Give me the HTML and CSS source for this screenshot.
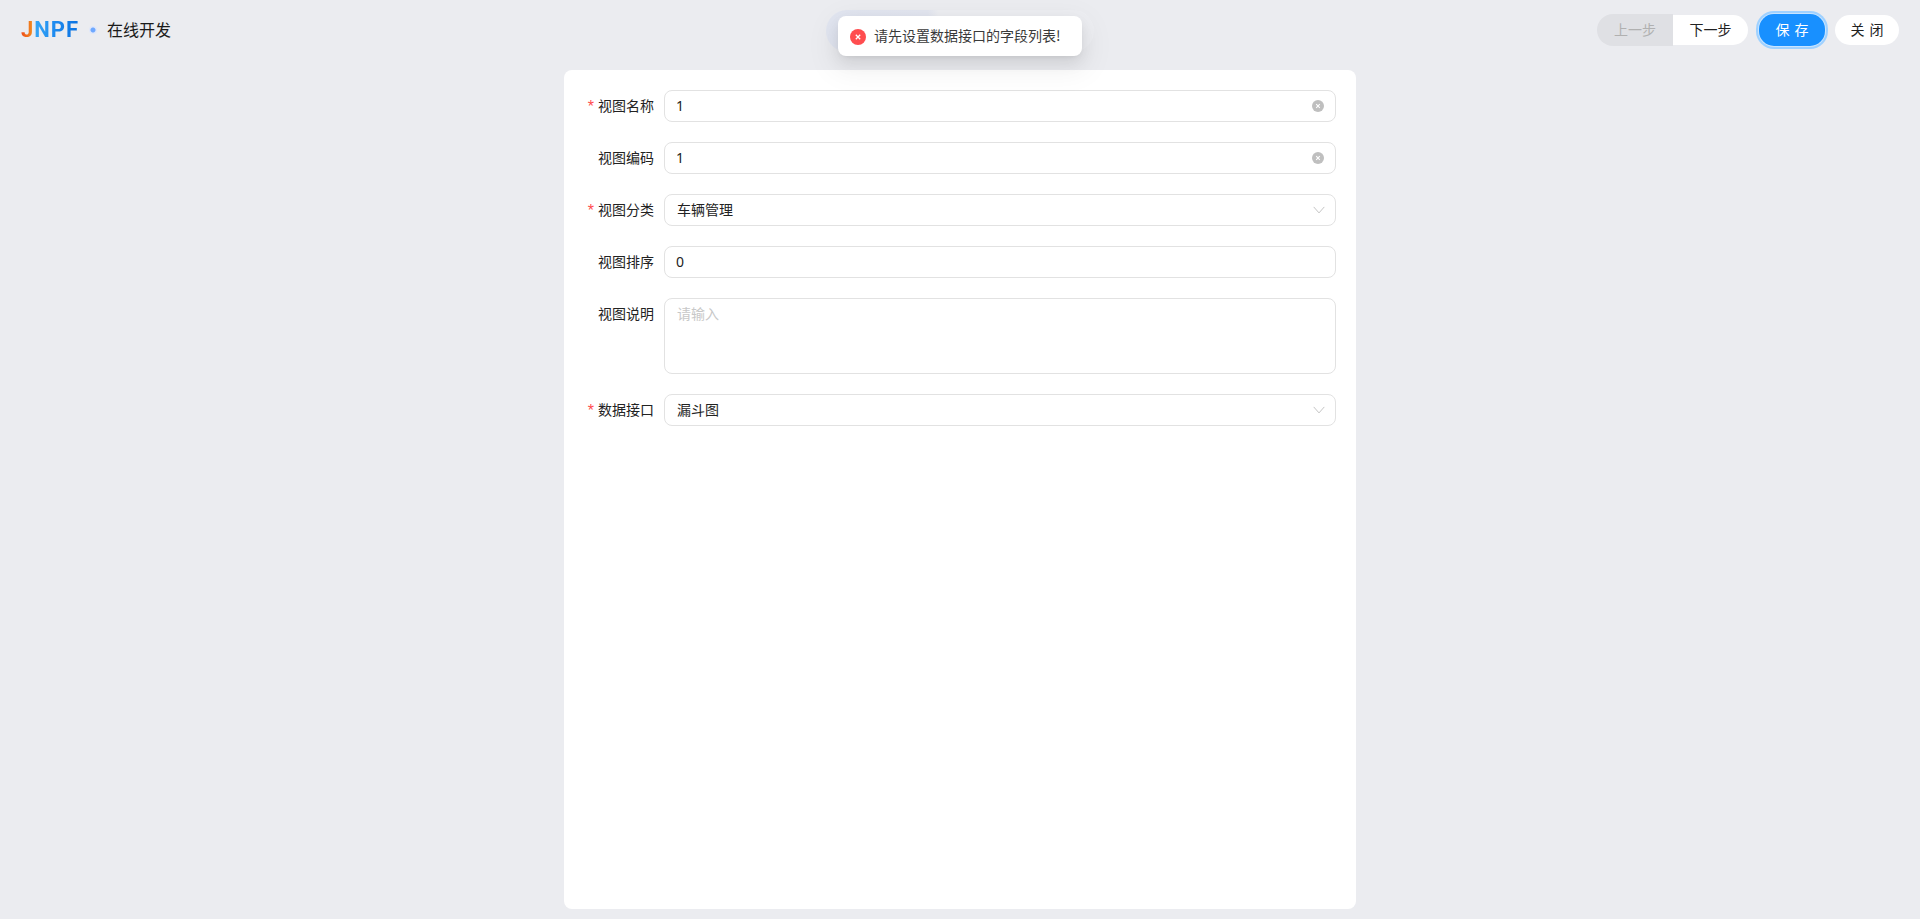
FILE: index.html
```html
<!DOCTYPE html>
<html lang="zh">
<head>
<meta charset="utf-8">
<title>在线开发</title>
<link rel="stylesheet" href="styles.css">
</head>
<body>
<header class="topbar">
  <div class="brand">
    <span class="logo">JNPF</span>
    <span class="dot"></span>
    <span class="title">在线开发</span>
  </div>
  <div class="actions">
    <div class="steps">
      <button class="step prev">上一步</button>
      <button class="step next">下一步</button>
    </div>
    <button class="btn primary">保 存</button>
    <button class="btn">关 闭</button>
  </div>
</header>
<main class="main">
  <form class="card">
    <div class="row">
      <label class="label req">视图名称</label>
      <div class="field"><span class="value num">1</span>
        <svg class="clear" viewBox="0 0 12 12"><circle cx="6" cy="6" r="6" fill="#bfbfbf"/><path d="M4.2 4.2l3.6 3.6M7.8 4.2L4.2 7.8" stroke="#fff" stroke-width="1.1"/></svg></div>
    </div>
    <div class="row">
      <label class="label">视图编码</label>
      <div class="field"><span class="value num">1</span>
        <svg class="clear" viewBox="0 0 12 12"><circle cx="6" cy="6" r="6" fill="#bfbfbf"/><path d="M4.2 4.2l3.6 3.6M7.8 4.2L4.2 7.8" stroke="#fff" stroke-width="1.1"/></svg></div>
    </div>
    <div class="row">
      <label class="label req">视图分类</label>
      <div class="field"><span class="value">车辆管理</span>
        <svg class="arrow" viewBox="0 0 12 8"><path d="M.7.9L6 6.9 11.3.9" fill="none" stroke="#c4c4c4" stroke-width="1"/></svg></div>
    </div>
    <div class="row">
      <label class="label">视图排序</label>
      <div class="field"><span class="value num">0</span></div>
    </div>
    <div class="row">
      <label class="label">视图说明</label>
      <div class="field area"><span class="value placeholder">请输入</span></div>
    </div>
    <div class="row">
      <label class="label req">数据接口</label>
      <div class="field"><span class="value">漏斗图</span>
        <svg class="arrow" viewBox="0 0 12 8"><path d="M.7.9L6 6.9 11.3.9" fill="none" stroke="#c4c4c4" stroke-width="1"/></svg></div>
    </div>
  </form>
</main>
<div class="toast-ghost"></div>
<div class="toast">
  <svg class="toast-icon" viewBox="0 0 16 16"><circle cx="8" cy="8" r="8" fill="#ff4d4f"/><path d="M5.8 5.8l4.4 4.4M10.2 5.8l-4.4 4.4" stroke="#fff" stroke-width="1.3"/></svg>
  <span>请先设置数据接口的字段列表!</span>
</div>
</body>
</html>
```
FILE: styles.css
```css
* { box-sizing: border-box; }
html, body { margin: 0; height: 100%; }
body {
  background: #ebecf0;
  font-family: "Noto Sans CJK SC", "Noto Sans", sans-serif;
  font-size: 14px;
  color: #222;
  overflow: hidden;
}
.topbar {
  height: 60px;
  padding: 0 21px;
  display: flex;
  align-items: center;
  justify-content: space-between;
}
.brand { display: flex; align-items: center; }
.logo {
  width: 59px;
  font-family: Roboto, "Liberation Sans", sans-serif;
  font-size: 22px;
  font-weight: 700;
  letter-spacing: 1px;
  line-height: 22px;
  margin-top: -1px;
  white-space: nowrap;
  background: linear-gradient(90deg, #ef4b17 0, #f08a20 19%, #35a5f5 24%, #1f8cf0 55%, #0a70e0 100%);
  -webkit-background-clip: text;
  background-clip: text;
  color: transparent;
}
.dot {
  width: 8px;
  height: 8px;
  margin: 0 10px 0 9px;
  border-radius: 50%;
  background: radial-gradient(circle, #6ea8ff 0 2px, #dfe7fa 3px);
}
.title { font-size: 16px; color: #1a1a1a; line-height: 22px; margin-top: -2px; }
.actions { display: flex; align-items: center; gap: 10px; }
.steps { display: flex; align-items: center; margin-right: 1px; }
.step {
  border: 0;
  font: inherit;
  padding: 0 0 2px;
}
.prev { height: 32px; width: 76px; background: #dfe0e4; color: #b0b0b0; border-radius: 16px 0 0 16px; }
.next { height: 30px; width: 75px; background: #fff; color: #222; border-radius: 0 15px 15px 0; }
.btn {
  height: 30px;
  width: 64px;
  border: 0;
  border-radius: 15px;
  background: #fff;
  color: #222;
  font: inherit;
  padding: 0 0 2px;
  word-spacing: 2px;
}
.primary {
  background: #1890ff;
  color: #fff;
  box-shadow: 0 0 0 1px #c8e4ff, 0 0 0 3px #9fd1ff;
  height: 32px;
  width: 66px;
}
.main { display: flex; justify-content: center; }
.card {
  width: 792px;
  height: 839px;
  margin-top: 10px;
  background: #fff;
  border-radius: 8px;
  padding: 20px 20px 0 0;
  display: flex;
  flex-direction: column;
  gap: 20px;
}
.row { display: flex; }
.label {
  width: 100px;
  height: 32px;
  line-height: 30px;
  padding-right: 10px;
  text-align: right;
  color: #222;
  white-space: nowrap;
  display: flex;
  justify-content: flex-end;
}
.req::before {
  content: "*";
  color: #ff4d4f;
  margin-right: 4px;
  font-size: 16px;
  line-height: 34px;
  font-family: "Liberation Sans", sans-serif;
}
.field {
  flex: 1;
  height: 32px;
  border: 1px solid #e2e2e2;
  border-radius: 8px;
  padding: 0 12px;
  display: flex;
  align-items: center;
  justify-content: space-between;
  background: #fff;
}
.value { line-height: 20px; margin-top: -2px; color: #222; }
.value.num { margin: 0 0 0 -1px; font-family: "Noto Sans", sans-serif; }
.area { height: 76px; align-items: flex-start; padding-top: 5px; }
.value.placeholder { color: #c8c8c8; margin-top: -1px; }
.clear { width: 12px; height: 12px; margin-right: -1px; }
.arrow { width: 12px; height: 8px; margin-right: -2px; }
.toast-ghost {
  position: absolute;
  left: 826px;
  top: 10px;
  width: 268px;
  height: 42px;
  border-radius: 21px;
  background: linear-gradient(90deg, #e2e6f1 0, #e4e7f1 38%, #eeeff3 42%, #eeeff3 100%);
}
.toast {
  position: absolute;
  left: 838px;
  top: 16px;
  width: 244px;
  height: 40px;
  padding: 0 12px;
  display: flex;
  align-items: center;
  gap: 8px;
  background: #fff;
  border-radius: 8px;
  box-shadow: 0 6px 16px rgba(0, 0, 0, .08), 0 3px 6px -4px rgba(0, 0, 0, .12), 0 9px 28px 8px rgba(0, 0, 0, .05);
  color: #3a3a3a;
  white-space: nowrap;
}
.toast span { margin-top: -2px; }
.toast-icon { width: 16px; height: 16px; flex: none; margin-top: 1px; }
```
